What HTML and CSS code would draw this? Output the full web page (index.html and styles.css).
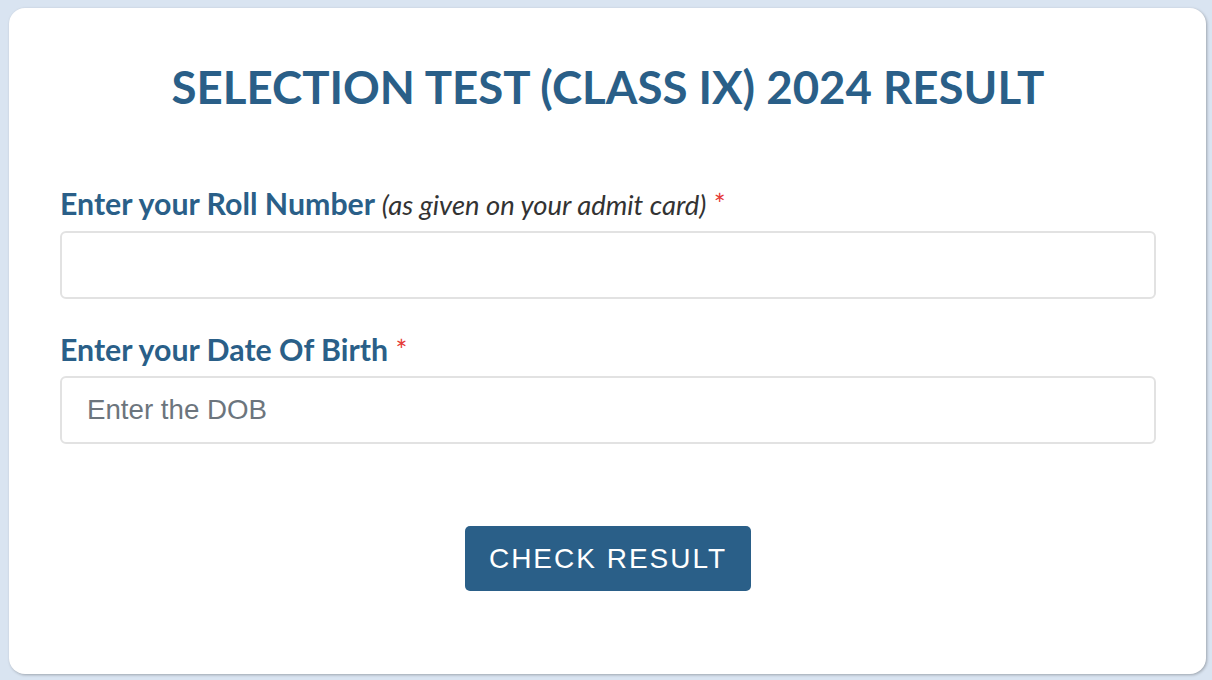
FILE: index.html
```html
<!DOCTYPE html>
<html>
<head>
<meta charset="utf-8">
<link rel="stylesheet" href="styles.css">
</head>
<body>
<div class="card">
  <h1 class="title">SELECTION TEST (CLASS IX) 2024 RESULT</h1>
  <form class="form">
    <div class="field">
      <label class="label">Enter your Roll Number <span class="hint">(as given on your admit card)</span> <span class="req">*</span></label>
      <input class="input" type="text">
    </div>
    <div class="field">
      <label class="label">Enter your Date Of Birth <span class="req">*</span></label>
      <input class="input" type="text" placeholder="Enter the DOB">
    </div>
    <div class="actions">
      <button class="btn" type="button">CHECK RESULT</button>
    </div>
  </form>
</div>
</body>
</html>
```
FILE: styles.css
```css
html, body {
  margin: 0;
  padding: 0;
}
body {
  background: #d9e4f1;
  padding: 8px 6px 6px 9px;
  height: 680px;
  box-sizing: border-box;
  font-family: Lato, "Liberation Sans", sans-serif;
}
.card {
  background: #fff;
  border-radius: 16px;
  box-shadow: 1px 1px 3px rgba(0,0,0,0.28);
  height: 100%;
  box-sizing: border-box;
  padding: 51px 50px 0 51px;
}
.title {
  margin: 0;
  text-align: center;
  color: #2a5f88;
  font-weight: 700;
  font-size: 45.6px;
  line-height: 56px;
}
.form {
  margin-top: 70px;
  display: flex;
  flex-direction: column;
  gap: 32px;
}
.field {
  display: flex;
  flex-direction: column;
}
.label {
  color: #2a5f88;
  font-weight: 700;
  font-size: 30.3px;
  line-height: 36px;
  margin-bottom: 8px;
}
.hint {
  font-weight: 400;
  font-style: italic;
  color: #333;
  font-size: 27.4px;
}
.req {
  color: #e53935;
  font-weight: 400;
  font-size: 28px;
}
.input {
  height: 68px;
  box-sizing: border-box;
  border: 2px solid #e2e2e2;
  border-radius: 6px;
  padding: 0 25px;
  font-family: "Liberation Sans", Arial, sans-serif;
  font-size: 27.7px;
  outline: none;
}
.input::placeholder {
  color: #6c757d;
}
.actions {
  display: flex;
  justify-content: center;
  margin-top: 50px;
}
.btn {
  background: #2a5f88;
  color: #fff;
  border: none;
  border-radius: 5px;
  width: 286px;
  height: 65px;
  padding: 0;
  font-family: "Liberation Sans", Arial, sans-serif;
  font-size: 28px;
  letter-spacing: 2px;
  cursor: pointer;
}
```
